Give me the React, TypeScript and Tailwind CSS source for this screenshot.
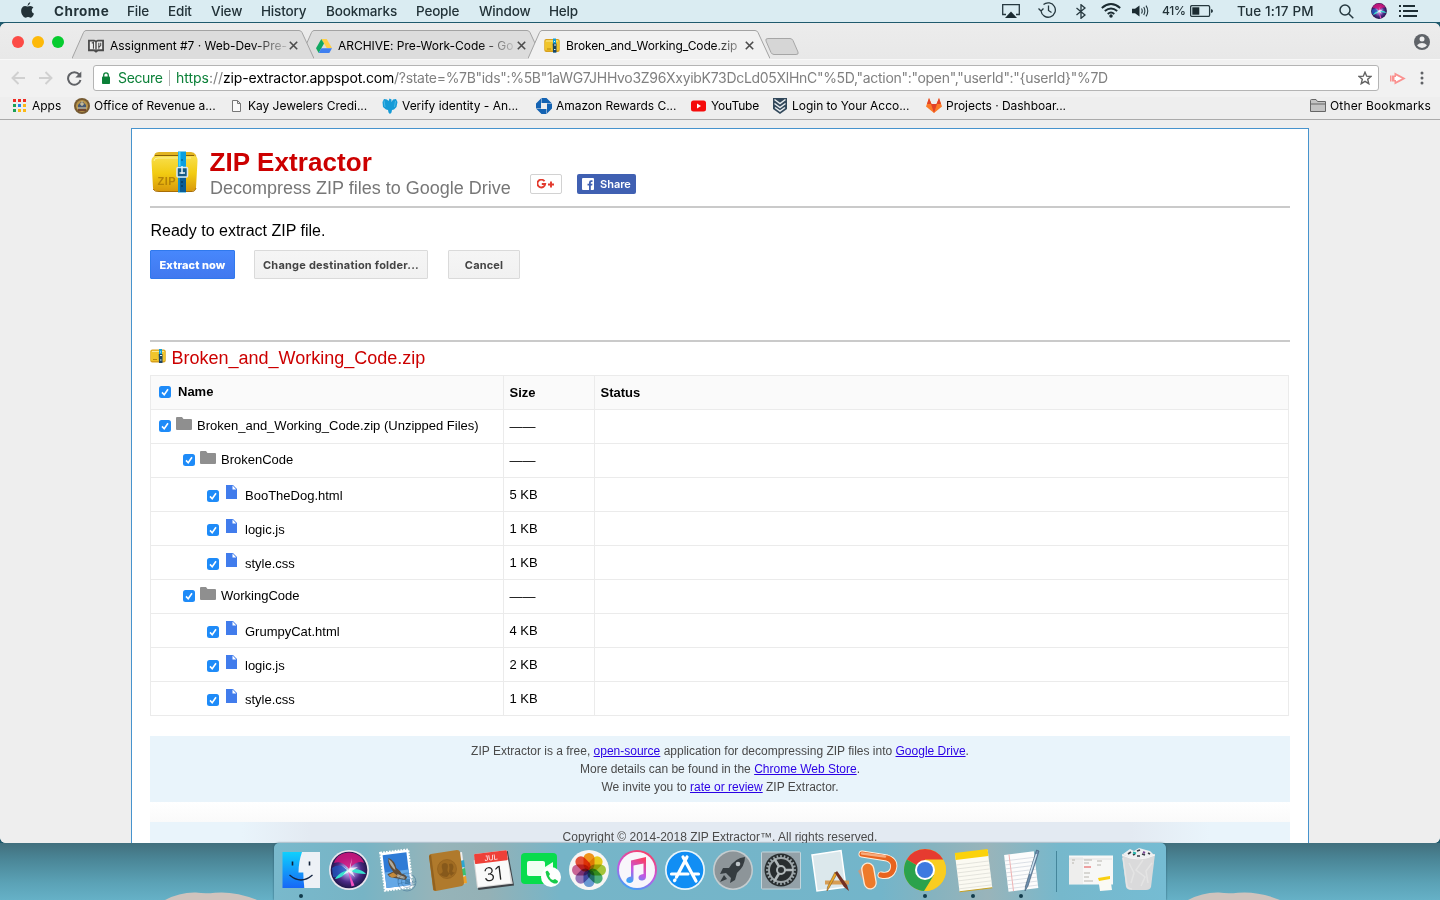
import React from "react";

const UI = "font-['Inter',sans-serif]";

function Menu({ w, children, bold }: { w: string; children: string; bold?: boolean }) {
  return <span className={`${w} shrink-0 whitespace-nowrap ${bold ? "font-bold tracking-[0.500px]" : "font-medium tracking-[-0.180px]"}`}>{children}</span>;
}

function SiriBall({ id }: { id: string }) {
  return (
    <g>
      <defs>
        <radialGradient id={id} cx="50%" cy="50%" r="55%">
          <stop offset="0" stopColor="#fff" />
          <stop offset=".25" stopColor="#a890dd" />
          <stop offset=".6" stopColor="#4c2a86" />
          <stop offset="1" stopColor="#16103a" />
        </radialGradient>
      </defs>
      <circle cx="24" cy="27" r="20" fill="#e9e6ee" />
      <circle cx="24" cy="27" r="18.300" fill={`url(#${id})`} />
      <path d="M9 20C13 6 35 6 39 20C33 17 28 22 24 26C19 20 15 18 9 20Z" fill="#d3147c" opacity=".85" />
      <path d="M7 25C13 20 20 23 24 27C18 31 12 35 8 34Z" fill="#1d58c0" opacity=".75" />
      <path d="M24 27C31 25 38 27 41 31C35 31 29 30 24 27ZM24 27C20 32 14 36 10 36C13 31 18 28 24 27Z" fill="#37e3cf" />
      <path d="M23 27L26.500 43.500L29.500 42.500Z" fill="#f350c0" />
      <path d="M24 27L27 15L25.500 25L33 24L27 28L30 34L24 29L18 32L22 27L16 22Z" fill="#fff" opacity=".75" />
    </g>
  );
}

function ZipLogo({ className }: { className: string }) {
  return (
    <svg className={className} viewBox="0 0 47 42">
      <defs>
        <linearGradient id="zipBody" x1="0" y1="0" x2="0" y2="1">
          <stop offset="0" stopColor="#f8df4c" />
          <stop offset=".5" stopColor="#f2cb12" />
          <stop offset="1" stopColor="#d99a0a" />
        </linearGradient>
      </defs>
      <path d="M4 2.500Q5 1 8 1H40Q43 1 45 4L46 10H1Z" fill="#e2b422" />
      <path d="M4 4.700H43" stroke="#8a6106" strokeWidth="1.200" />
      <path d="M.5 10Q.5 5 6 5H42Q47 5 46.500 10L45 37Q44.500 40 41 40H6Q2.500 40 2 37Z" fill="url(#zipBody)" />
      <path d="M3 10Q3 7 7 7H40" stroke="#fcf09a" fill="none" />
      <path d="M2 38Q4 41 8 40.500H40Q44 41 45 37" stroke="#a86d05" fill="none" />
      <rect x="27" y=".500" width="8" height="41" fill="#0a9fe0" />
      <path d="M28.500 1V15" stroke="#41d3ff" strokeWidth="2" />
      <path d="M27 27H35V41H27Z" fill="#0a5c96" />
      <path d="M28 27V41" stroke="#18a4df" strokeWidth="1.500" />
      <rect x="26" y="16.500" width="10.500" height="9.500" rx="1" fill="#155b86" stroke="#dce8ee" strokeWidth="1.600" />
      <path d="M31 15V23M28.500 22H34" stroke="#e9f4f8" strokeWidth="1.500" />
      <circle cx="31" cy="9" r=".8" fill="#05466b" />
      <circle cx="31" cy="31" r=".8" fill="#04283e" />
      <circle cx="31" cy="35" r=".8" fill="#04283e" />
      <text x="6.500" y="34" fontFamily="Liberation Sans" fontWeight="bold" fontSize="11" fill="#b58307" textLength="18">ZIP</text>
    </svg>
  );
}

function SmallZip({ className }: { className: string }) {
  return (
    <svg className={className} viewBox="0 0 16 14">
      <rect x=".3" y=".5" width="15.400" height="13" rx="2" fill="#d8a01c" />
      <rect x=".8" y="1.500" width="14.400" height="10.500" rx="1.500" fill="#f0c52c" />
      <path d="M2 2.500H14" stroke="#fae995" />
      <path d="M3 10.500H7" stroke="#b8860b" />
      <path d="M9 0H12V14H9Z" fill="#129fd8" />
      <path d="M8.700 5H12.500V14H9Z" fill="#1c4564" />
      <path d="M10 6.500H12M10 3H11M10 11H11.500" stroke="#e2f2f7" />
    </svg>
  );
}

function CloseX() {
  return (
    <svg className="h-[9px] w-[9px] shrink-0" viewBox="0 0 9 9">
      <path d="M.8.8L8.200 8.200M8.200.8L.8 8.200" stroke="#4c4c4c" strokeWidth="1.600" />
    </svg>
  );
}

function Tab({ icon, title, active, track, z }: { icon: React.ReactNode; title: string; active?: boolean; track: string; z: string }) {
  return (
    <div className={`relative h-[29px] w-[242px] shrink-0 -mr-[14px] ${z}`}>
      <svg className="absolute inset-0 h-[29px] w-[242px]" viewBox="0 0 242 29">
        <path d="M0 29L11.500 2.500Q12.500 .5 14 .5H227Q229 .5 230 2.500L242 29Z" fill={active ? "#f1f1f1" : "#dcdcdc"} />
        <path d="M0 28.500L11.500 2.500Q12.500 .5 14 .5H227Q229 .5 230 2.500L242 28.500" fill="none" stroke="#a3a3a3" />
      </svg>
      <div className="relative flex h-[29px] items-center pl-4 pt-[2px]">
        <span className="flex w-[22px] shrink-0">{icon}</span>
        <span className="flex w-[172px] shrink-0">
          <span className={`block whitespace-nowrap bg-clip-text text-[12px] leading-[16px] text-transparent ${track} ${active ? "bg-[linear-gradient(90deg,#000_86%,#0006_100%)]" : "bg-[linear-gradient(90deg,#000_80%,#0002_100%)]"}`}>{title}</span>
        </span>
        <span className="ml-[7px] flex"><CloseX /></span>
      </div>
    </div>
  );
}

function DriveIcon() {
  return (
    <svg className="h-[14px] w-4" viewBox="0 0 16 14">
      <path d="M5.300 0H10.700L16 9H10.700Z" fill="#ffcf48" />
      <path d="M5.300 0L8 4.600L2.700 14L0 9.300Z" fill="#11a861" />
      <path d="M5.300 9.300H16L13.300 14H2.700Z" fill="#3f7ff0" />
    </svg>
  );
}

function BookIcon() {
  return (
    <svg className="h-[14px] w-[16px]" viewBox="0 0 17 14" fill="none" stroke="#4a4a4a">
      <path d="M1 1.200H6.500L8.500 2.200L10.500 1.200H16V11.500H10.500L8.500 13L6.500 11.500H1Z" fill="#eee" strokeWidth="1.900" />
      <path d="M8.500 2.500V12" strokeWidth="1.500" />
      <path d="M4 4L5.800 3V10M11.500 3.500V10M11.500 8.500L13.500 6.500V3.500" strokeWidth="1.100" />
    </svg>
  );
}

function Bookmark({ icon, label, iw, tw, track = "tracking-[-0.030px]" }: { icon: React.ReactNode; label: string; iw: string; tw: string; track?: string }) {
  return (
    <div className="flex shrink-0 items-center">
      <span className={`${iw} flex shrink-0`}>{icon}</span>
      <span className={`${tw} ${track} shrink-0 whitespace-nowrap`}>{label}</span>
    </div>
  );
}

function Check() {
  return (
    <svg className="h-3 w-3 shrink-0" viewBox="0 0 12 12">
      <rect width="12" height="12" rx="2.500" fill="#1e8bf8" />
      <path d="M3 6.400L5.200 8.700L9 3.300" fill="none" stroke="#fff" strokeWidth="1.600" />
    </svg>
  );
}

const rows = [
  { name: "Broken_and_Working_Code.zip (Unzipped Files)", size: "——", depth: 0, folder: true },
  { name: "BrokenCode", size: "——", depth: 1, folder: true },
  { name: "BooTheDog.html", size: "5 KB", depth: 2 },
  { name: "logic.js", size: "1 KB", depth: 2 },
  { name: "style.css", size: "1 KB", depth: 2 },
  { name: "WorkingCode", size: "——", depth: 1, folder: true },
  { name: "GrumpyCat.html", size: "4 KB", depth: 2 },
  { name: "logic.js", size: "2 KB", depth: 2 },
  { name: "style.css", size: "1 KB", depth: 2 },
];
const indent = ["pl-2", "pl-8", "pl-14"];

function FileRow({ row }: { row: (typeof rows)[number] }) {
  return (
    <div className="flex h-[34px] border-b border-[#ebebeb]">
      <div className={`flex w-[353px] items-center border-r border-[#ebebeb] ${indent[row.depth]}`}>
        <span className={row.folder ? "flex pb-[1px]" : "flex pt-[3px]"}><Check /></span>
        {row.folder ? (
          <svg className="mb-[7px] ml-[5px] h-[13px] w-4" viewBox="0 0 16 13">
            <path d="M0 1Q0 0 1 0H6L7.500 2H15Q16 2 16 3V12Q16 13 15 13H1Q0 13 0 12Z" fill="#8f8f8f" />
          </svg>
        ) : (
          <svg className="mb-[6px] ml-[7px] mr-[3px] h-[14px] w-[11px]" viewBox="0 0 11 14">
            <path d="M0 0H7L11 4V14H0Z" fill="#417cec" />
            <path d="M6.500 .6V4.400H10.300Z" fill="#fff" />
          </svg>
        )}
        <span className={`ml-[5px] whitespace-nowrap ${row.folder ? "pb-px" : "pt-[3px]"}`}>{row.name}</span>
      </div>
      <div className="w-[91px] border-r border-[#ebebeb] pl-[5.500px] leading-[33px]">{row.size}</div>
    </div>
  );
}

function DockIcon({ children, dot }: { children: React.ReactNode; dot?: boolean }) {
  return (
    <svg className="h-[57px] w-12 shrink-0" viewBox="0 0 48 57">
      {children}
      {dot && <circle cx="24" cy="53" r="2" fill="#123c4c" />}
    </svg>
  );
}

const petals = ["#f79a1c", "#efd21c", "#a8cc3b", "#4fb580", "#6c9fdc", "#9a7bc2", "#d0699c", "#ec5338"];
const toothAngles = Array.from({ length: 24 }, (_, i) => i * 15);

function Dock() {
  return (
    <div className="flex h-[57px] w-[892px] rounded-t-[5px] bg-[linear-gradient(90deg,#79b9cc_0%,#77b4c5_10%,#96b4b9_18%,#94b1b6_24%,#76b5c8_32%,#73b5ca_68%,#86b3bf_74%,#99b4ba_80%,#76b8cc_88%,#75bcd3_100%)] pl-[3px] shadow-[0_0_2px_#24566a]">
      <DockIcon dot>
        <defs><linearGradient id="finder" x1="0" y1="0" x2="0" y2="1"><stop stopColor="#0fd0fd" /><stop offset="1" stopColor="#1767f6" /></linearGradient></defs>
        <path d="M5.500 9H27V45H5.500Z" fill="url(#finder)" />
        <path d="M25 9H43V45H27.500Q26.300 38 26.300 29.500H21.500Q21.500 19 25 9Z" fill="#edf1f6" />
        <path d="M15.500 18.500V22.500M32.500 18.500V22.500" stroke="#101f36" strokeWidth="1.600" />
        <path d="M12.500 32Q24 42 35.500 32" stroke="#122340" strokeWidth="1.300" fill="none" />
      </DockIcon>
      <DockIcon><SiriBall id="siriDock" /></DockIcon>
      <DockIcon>
        <g transform="rotate(-7 24 27)">
          <rect x="9.500" y="8" width="28" height="38" fill="#fff" />
          <rect x="9.500" y="8" width="28" height="38" fill="none" stroke="#fff" strokeWidth="2.200" strokeDasharray="1.700 1.200" />
          <rect x="11.500" y="10.500" width="24" height="33" fill="#2f7bd6" />
          <rect x="11.500" y="28" width="24" height="15.500" fill="#65a8e6" />
          <path d="M17 14Q23 17 23.500 25Q27 28 28 31Q33 33 33 36L31 38L22 35L16 33L14 30L20 28Q15 21 17 14Z" fill="#5f4c39" />
          <path d="M17 15Q22 19 22.500 27Q17 22 17 15Z" fill="#b1ab9c" />
          <path d="M24 31L31 35L30 37L23 34Z" fill="#ada698" />
          <path d="M15 31L20 29L24 33L18 34Z" fill="#c48a3c" />
        </g>
        <circle cx="34" cy="39" r="9" fill="none" stroke="#2b5f88" strokeWidth=".7" opacity=".6" />
        <circle cx="34" cy="39" r="5.500" fill="none" stroke="#2b5f88" strokeWidth=".7" opacity=".6" />
        <rect x="32" y="36" width="5" height="5" fill="#2b5f88" opacity=".45" />
        <path d="M24 37Q29 34 34 38T43 38M25 41Q30 38 35 41T42 41" fill="none" stroke="#2b5f88" strokeWidth=".6" opacity=".6" />
      </DockIcon>
      <DockIcon>
        <path d="M34 10L41 9L45 40L37 42Z" fill="#eee" />
        <path d="M39 18L43 17L44 24L39 25Z" fill="#2ca7d2" />
        <path d="M40 26L44 25L45 32L40 33Z" fill="#3ac16f" />
        <path d="M40 34L45 33L46 40L40 41Z" fill="#eca12b" />
        <path d="M8 13Q8 11.500 10 11L36 7Q38.500 7 39 9L43 40Q43 42 41 43L15 48Q12 48 12 46Z" fill="#b07a2c" />
        <path d="M8 13L10 11.500L15 47.500L12.500 47Z" fill="#93621f" />
        <circle cx="26" cy="26" r="9.500" fill="#a16c22" stroke="#8d5d1d" strokeWidth=".6" />
        <path d="M18.500 31Q22.500 30 21.500 27Q19 20 24 20Q28 20 26.500 26Q26 29 29 30.500L26 34Q21 34 18.500 31ZM28 21Q32 19 32.500 24Q32 27 31 28Q32 30 34 29.500L30 33L28 29Q29 25 28 21Z" fill="#87591b" />
      </DockIcon>
      <DockIcon>
        <g transform="rotate(-7 24 27)">
          <path d="M7 10H41L43 45H7Z" fill="#3e4348" />
          <path d="M6 15H40L42 43H6Z" fill="#d8d8d8" />
          <rect x="7" y="9" width="33" height="33" rx="1" fill="#fafafa" />
          <rect x="7" y="9" width="33" height="10" rx="1" fill="#ee4038" />
          <text x="23.500" y="17" fontSize="7.500" fontFamily="Liberation Sans" fill="#fff" textAnchor="middle">JUL</text>
          <text x="23.500" y="37.500" fontSize="19" fontFamily="Inter" fontWeight="300" fill="#222" textAnchor="middle">31</text>
        </g>
      </DockIcon>
      <DockIcon>
        <rect x="4" y="10" width="36" height="31" rx="4" fill="#08dc4d" />
        <rect x="10" y="18" width="18" height="15" rx="2" fill="#effff2" />
        <path d="M28 24L36 19V33L28 28Z" fill="#effff2" />
        <circle cx="34" cy="34" r="10" fill="#fff" />
        <path d="M28.500 29Q30 27 31 28L33 31L32 33Q33 36 36 37L38 36L41 38Q41 41 37 40.500Q30 38 28.500 29Z" fill="#17cc4b" />
      </DockIcon>
      <DockIcon>
        <circle cx="24" cy="27" r="20" fill="#f7f5f4" />
        {petals.map((c, i) => <rect key={c} x="18.500" y="10" width="11" height="17" rx="5.500" fill={c} className="mix-blend-multiply" transform={`rotate(${i * 45} 24 27)`} />)}
      </DockIcon>
      <DockIcon>
        <defs>
          <linearGradient id="tunes" x1=".7" y1="0" x2=".3" y2="1"><stop stopColor="#fb3e63" /><stop offset=".55" stopColor="#c358e4" /><stop offset="1" stopColor="#37a6f8" /></linearGradient>
        </defs>
        <circle cx="24" cy="27" r="20" fill="url(#tunes)" /><circle cx="24" cy="27" r="18" fill="#f8f6fb" />
        <path d="M18 17.500L33 14V33.500Q33 37 29.500 37.500Q25.500 38 25.500 34.500Q25.500 31.500 30.500 31V20.500L20.500 22.500V36Q20.500 39.500 17 40Q13 40 13.300 37Q13.600 34 18 33.500Z" fill="url(#tunes)" />
      </DockIcon>
      <DockIcon>
        <circle cx="24" cy="27" r="20" fill="#e9f5fb" /><circle cx="24" cy="27" r="18.300" fill="#118ef4" />
        <path d="M26 14L15.500 34M22 14L35 38M10.500 31H27M32 31H37.500M13.500 37.500L14 37" stroke="#fff" strokeWidth="3.200" strokeLinecap="round" />
      </DockIcon>
      <DockIcon>
        <circle cx="24" cy="27" r="20" fill="#c5cdd0" /><circle cx="24" cy="27" r="18.500" fill="#8d9599" />
        <path d="M36 14Q26 15 20 25L14 25L11 31L17 30L22 35L21 40L26 37L28 30Q36 23 36 14Z" fill="#353c40" />
        <path d="M15 32L11 39L18 36Z" fill="#353c40" /><circle cx="29" cy="21" r="2.300" fill="#bec5c8" />
      </DockIcon>
      <DockIcon>
        <rect x="4.500" y="9" width="39" height="37" rx="1" fill="#93a1a8" stroke="#c3d5dc" />
        <circle cx="24" cy="27" r="16.500" fill="#282d2f" />
        {toothAngles.map((a) => <path key={a} d="M23.200 12H24.800V15H23.200Z" fill="#9aa5a9" transform={`rotate(${a} 24 27)`} />)}
        <circle cx="24" cy="27" r="12" fill="none" stroke="#9da5a8" strokeWidth="2" />
        <circle cx="24" cy="27" r="4" fill="none" stroke="#b1b8ba" strokeWidth="2" />
        <path d="M28 27H36M22 23.500L17.500 16M22 30.500L17.500 38" stroke="#b1b8ba" strokeWidth="2.500" />
      </DockIcon>
      <DockIcon>
        <path d="M7 12L36 7.500L41 44L12 48Z" fill="#dce8ec" stroke="#fff" strokeWidth="1.500" />
        <path d="M20 37.500H44V41.500H20Z" fill="#d69d55" />
        <path d="M32 31L24 45L22 48L22.500 44L30 29Z" fill="#efaa26" stroke="#7f542a" strokeWidth=".6" />
        <path d="M32 28L42 42L44 48L39 44L30 30Z" fill="#733022" />
      </DockIcon>
      <DockIcon>
        <path d="M9 11L34 15Q43 18 40 27Q37 34 28 32" stroke="#fff0df" strokeWidth="7" fill="none" strokeLinecap="round" />
        <path d="M9 11L34 15Q43 18 40 27Q37 34 28 32" stroke="#e8641f" strokeWidth="5.200" fill="none" strokeLinecap="round" />
        <path d="M9 10.500L32 13.500" stroke="#f6ad80" strokeWidth="2.500" strokeLinecap="round" />
        <path d="M5 28L11 39L10 24Z" fill="#c89a80" />
        <rect x="10" y="20" width="12" height="26" rx="6" fill="#ee7a2a" stroke="#ffe9d3" strokeWidth="1.300" transform="rotate(-10 16 33)" />
      </DockIcon>
      <DockIcon dot>
        <circle cx="24" cy="27" r="21" fill="#f7ca1d" />
        <path d="M24 27L5.800 16.500A21 21 0 0 1 42.200 16.500H24Z" fill="#e63b30" />
        <path d="M24 27L5.800 16.500A21 21 0 0 0 23 48L33 32Z" fill="#2ba24c" />
        <path d="M24 17H42.500A21 21 0 0 1 24 48L33 32Z" fill="#f9cd20" />
        <circle cx="24" cy="27" r="10" fill="#fff" /><circle cx="24" cy="27" r="8" fill="#3d7ae0" />
      </DockIcon>
      <DockIcon dot>
        <g transform="rotate(-7 24 27)"><rect x="8" y="9" width="33" height="38" fill="#fbfaf2" /><rect x="8" y="8" width="33" height="7" fill="#fbd20b" />
        <path d="M8 20H41M8 24H41M8 28H41M8 32H41M8 36H41M8 40H41M8 44H41" stroke="#dcdbd5" strokeWidth=".7" /><path d="M8 47H41" stroke="#c5a023" /></g>
      </DockIcon>
      <DockIcon dot>
        <g transform="rotate(-7 24 27)"><rect x="9" y="10" width="30" height="37" fill="#fcfcfc" />
        <path d="M9 16H39M9 20H39M9 24H39M9 28H39M9 32H39M9 36H39M9 40H39M9 44H39" stroke="#cfd5dd" strokeWidth=".7" /><path d="M14 10V47" stroke="#efb4b4" /></g>
        <path d="M39.500 7L42 8L31 43L28 48L28.500 43Z" fill="#6d8eae" stroke="#3a566f" strokeWidth=".6" /><path d="M39.500 11L33 31" stroke="#d3e6f2" strokeWidth="1.300" />
      </DockIcon>
      <svg className="h-[57px] w-[24px] shrink-0" viewBox="0 0 24 57"><path d="M11.500 8V49" stroke="#45869b" /></svg>
      <svg className="h-[57px] w-12 shrink-0" viewBox="0 0 48 57">
        <rect x="0" y="12.500" width="44" height="29" fill="#f7f7f6" />
        <path d="M0 14H14V41H0Z" fill="#eeeeed" /><path d="M0 16H43" stroke="#e0e0e0" />
        <path d="M15 17H23M15 20H20M15 30H21M15 34H20M15 38H24M3 17H6M3 20H5M28 18H33M28 22H32" stroke="#b8b5ae" />
        <path d="M15 24H22" stroke="#e34a4a" />
        <path d="M29 35L41 33L43 47L31 48Z" fill="#fbfaf4" /><path d="M29 35L41 33V36L30 38Z" fill="#f9cf12" />
      </svg>
      <svg className="h-[57px] w-12 shrink-0" viewBox="0 0 48 57">
        <path d="M5 11H38L34 44Q33 47 29 47H15Q10 47 9 44Z" fill="#dadadb" />
        <path d="M6 15L10 43Q11 46 15 46M12 20L17 30L14 40M26 17L19 27L28 34L24 43M35 20L29 28L31 40" stroke="#e4e4e4" fill="none" strokeWidth="1.500" />
        <path d="M6 11L13 6L17 8L22 5L29 7L33 8L37 12L29 15H13Z" fill="#eff0f1" />
        <path d="M11 11L14 9M16 12L18 11M20 8L23 7M25 11L28 12M31 10L33 11M20 13H23" stroke="#3a3e45" strokeWidth="1.700" fill="none" />
        <path d="M16 9.500L19 10.500" stroke="#22b4a8" strokeWidth="2" /><path d="M26 9L28 10" stroke="#7c4995" strokeWidth="2" />
        <path d="M5 12Q21 20 38 12" fill="none" stroke="#f7f7f7" />
      </svg>
    </div>
  );
}

function Link({ children }: { children: string }) {
  return <a className="text-[#2a00e6] underline">{children}</a>;
}

export default function App() {
  return (
    <div className="relative flex h-[900px] w-[1440px] flex-col overflow-hidden bg-[#1f5a6d] font-['Liberation_Sans',sans-serif] text-black">
      <header className={`flex h-[22px] shrink-0 items-center bg-[#daecf2] pl-[21px] text-[13.500px] text-[#223238] ${UI}`}>
        <span className="w-[33px] shrink-0">
          <svg className="mb-[2px] h-[16px] w-[13px]" viewBox="0 0 13 16" fill="#233238"><path d="M9.200 0Q9.300 2.800 6.600 3.900Q6.300 1.200 9.200 0ZM6.700 4.600Q7.800 4 9.200 3.900Q11.400 4 12.400 5.600Q10.600 6.800 10.700 8.700Q10.800 10.800 13 11.700Q11.400 15.700 9.400 15.700Q7.900 14.900 6.700 15.100L4.600 15.700Q2.600 15.700 1.100 12.800Q-.6 9.200.7 6.200Q1.900 4 4 4Q5.300 4 6.700 4.600Z" /></svg>
        </span>
        <Menu w="w-[73px]" bold>Chrome</Menu>
        <Menu w="w-[41px]">File</Menu>
        <Menu w="w-[43px]">Edit</Menu>
        <Menu w="w-[50px]">View</Menu>
        <Menu w="w-[65px]">History</Menu>
        <Menu w="w-[90px]">Bookmarks</Menu>
        <Menu w="w-[63px]">People</Menu>
        <Menu w="w-[70px]">Window</Menu>
        <Menu w="w-[453px]">Help</Menu>
        <span className="w-9 shrink-0"><svg className="h-[14px] w-[18px]" viewBox="0 0 18 14"><path d="M4 10.500H.7V.7H17.300V10.500H14" fill="none" stroke="#26383f" strokeWidth="1.300" /><path d="M9 7.500L15 14H3Z" fill="#1b2b31" /></svg></span>
        <span className="w-[38px] shrink-0"><svg className="mb-[2px] h-[16px] w-[19px]" viewBox="0 0 19 16" fill="none" stroke="#26383f" strokeWidth="1.300"><path d="M3 9A7.200 7.200 0 1 0 5.500 2.500M.5 6.500L3 9L5.500 6.500M10.500 3.500V8.500L13.500 10.500" /></svg></span>
        <span className="w-[25px] shrink-0"><svg className="h-[15px] w-[10px]" viewBox="0 0 10 15" fill="none" stroke="#26383f" strokeWidth="1.300"><path d="M.5 4L9 11L5 14.300V.7L9 4L.5 11" /></svg></span>
        <span className="w-[31px] shrink-0"><svg className="mb-[2px] h-[15px] w-[20px]" viewBox="0 0 20 15" fill="none" stroke="#1b2b31" strokeWidth="1.900"><path d="M.8 5Q10-2.800 19.200 5M3.800 8Q10 2.800 16.200 8M6.700 10.900Q10 8.200 13.300 10.900" /><circle cx="10" cy="13" r=".8" fill="#1b2b31" /></svg></span>
        <span className="w-[30px] shrink-0"><svg className="h-[12px] w-[17px]" viewBox="0 0 17 12"><path d="M0 3.700H3L7.500.5V11.500L3 8.300H0Z" fill="#1b2b31" /><path d="M9.500 3.500Q11 6 9.500 8.500M11.700 2Q14 6 11.700 10M14 .6Q17.500 6 14 11.400" fill="none" stroke="#26383f" strokeWidth="1.100" /></svg></span>
        <span className="w-[28px] shrink-0 whitespace-nowrap text-[12px] font-medium tracking-[-0.300px]">41%</span>
        <span className="w-[47px] shrink-0"><svg className="h-[12px] w-[23px]" viewBox="0 0 23 12"><rect x=".6" y=".6" width="19" height="10.800" rx="1.500" fill="none" stroke="#26383f" strokeWidth="1.300" /><rect x="2.300" y="2.300" width="7" height="7.400" fill="#1b2b31" /><path d="M21 4Q23 4.500 23 6T21 8Z" fill="#26383f" /></svg></span>
        <span className="w-[102px] shrink-0 whitespace-nowrap font-medium tracking-[0.150px]">Tue 1:17 PM</span>
        <span className="w-[32px] shrink-0"><svg className="h-[15px] w-[15px]" viewBox="0 0 15 15" fill="none" stroke="#26383f" strokeWidth="1.500"><circle cx="6" cy="6" r="5" /><path d="M9.700 9.700L14.300 14.300" /></svg></span>
        <span className="w-[28px] shrink-0"><svg className="h-4 w-4" viewBox="5.500 8.500 37 37"><SiriBall id="siriMenu" /></svg></span>
        <span className="shrink-0"><svg className="h-[12px] w-[19px]" viewBox="0 0 19 12" stroke="#1e2e34" strokeWidth="1.900"><path d="M0 1H2M4 1H16M0 6H2M4 6H19M0 11H2M4 11H18" /></svg></span>
      </header>

      <main className="mt-px flex h-[820px] shrink-0 flex-col overflow-hidden rounded-[6px] bg-[#eeeeee]">
        <div className={`flex h-9 shrink-0 items-end bg-[linear-gradient(180deg,#ececec,#e8e8e8)] ${UI}`}>
          <div className="mb-[11px] flex w-[72px] shrink-0 gap-2 pl-3">
            <span className="h-3 w-3 rounded-full bg-[#fc4b46]" />
            <span className="h-3 w-3 rounded-full bg-[#fdb909]" />
            <span className="h-3 w-3 rounded-full bg-[#06cc2f]" />
          </div>
          <Tab icon={<BookIcon />} title="Assignment #7 · Web-Dev-Pre-" track="tracking-[-0.020px]" z="z-[2]" />
          <Tab icon={<DriveIcon />} title="ARCHIVE: Pre-Work-Code - Go" track="tracking-[-0.040px]" z="z-[1]" />
          <Tab icon={<SmallZip className="h-[15px] w-4" />} title="Broken_and_Working_Code.zip" active track="tracking-[-0.120px]" z="z-[3]" />
          <svg className="mb-[4px] ml-[9px] h-[17px] w-[34px] shrink-0" viewBox="0 0 34 17"><path d="M3 .5H25Q27 .5 28 2.500L33 14Q34 16.500 31 16.500H9Q7 16.500 6 14.500L1 3Q0 .5 3 .5Z" fill="#d6d6d6" stroke="#a6a6a6" /></svg>
          <svg className="mb-[9px] ml-auto mr-[10px] h-4 w-4" viewBox="0 0 16 16"><circle cx="8" cy="8" r="8" fill="#5f6368" /><circle cx="8" cy="5" r="2.500" fill="#eee" /><path d="M3 11.200Q5 9 8 9T13 11.200Q11 14 8 14T3 11.200Z" fill="#eee" /></svg>
        </div>

        <div className={`flex h-[38px] shrink-0 items-center border-t border-[#f8f8f8] bg-[#f1f1f1] pb-px ${UI}`}>
          <div className="flex w-[93px] shrink-0 items-center pl-[11px]">
            <svg className="h-[14px] w-[28px]" viewBox="0 0 28 14" fill="none" stroke="#d0d0d0" strokeWidth="1.900"><path d="M14 7H1.500M7.500 1L1.500 7L7.500 13" /></svg>
            <svg className="h-[14px] w-[28px]" viewBox="0 0 28 14" fill="none" stroke="#d0d0d0" strokeWidth="1.900"><path d="M0 7H12.500M6.500 1L12.500 7L6.500 13" /></svg>
            <svg className="h-[15px] w-[15px]" viewBox="0 0 15 15"><path d="M12.300 3.500A6.300 6.300 0 1 0 13.500 9" fill="none" stroke="#606266" strokeWidth="2" /><path d="M14.300.5V6.500H8.300Z" fill="#606266" /></svg>
          </div>
          <div className="flex h-[26px] w-[1286px] shrink-0 items-center rounded-[3px] border border-[#b4b4b4] bg-white pb-px text-[14px]">
            <svg className="ml-2 h-[12px] w-2 shrink-0" viewBox="0 0 8 12"><rect y="4.500" width="8" height="7.500" rx=".8" fill="#0b8038" /><path d="M1.700 5V3.200A2.300 2.300 0 0 1 6.300 3.200V5" fill="none" stroke="#0b8038" strokeWidth="1.300" /></svg>
            <span className="ml-2 w-[51px] shrink-0 tracking-[-0.350px] text-[#0b8038]">Secure</span>
            <span className="h-4 w-[7px] shrink-0 border-l border-[#b5b5b5]" />
            <span className="w-[1181px] shrink-0 whitespace-nowrap text-[#808080]">
              <span className="tracking-[-0.020px]"><span className="text-[#0b8038]">https</span>://</span><span className="tracking-[-0.180px] text-black">zip-extractor.appspot.com</span><span className="tracking-[-0.300px]">/?state=%7B"ids":%5B"1aWG7JHHvo3Z96XxyibK73DcLd05XlHnC"%5D,"action":"open","userId":"{"{userId}"}"%7D</span>
            </span>
            <svg className="ml-px h-[14px] w-[14px] shrink-0" viewBox="0 0 14 14" fill="none" stroke="#626262" strokeWidth="1.400"><path d="M7 1.200L8.700 5.200L13 5.500L9.700 8.300L10.800 12.700L7 10.300L3.200 12.700L4.300 8.300L1 5.500L5.300 5.200Z" /></svg>
          </div>
          <svg className="ml-[11px] h-[13px] w-[16px] shrink-0" viewBox="0 0 16 13" fill="#fa9290"><path d="M0 3.500H1.500V9.500H0ZM2 3.500H4.500V9.500H2ZM4.500.5L15.800 6.500L4.500 12.500Z" /><path d="M6 3.500L12 6.500L6 9.500V8H4.500V5H6Z" fill="#fff" /></svg>
          <svg className="ml-[14px] h-[14px] w-1 shrink-0" viewBox="0 0 4 14" fill="#606266"><circle cx="2" cy="2" r="1.500" /><circle cx="2" cy="7" r="1.500" /><circle cx="2" cy="12" r="1.500" /></svg>
        </div>

        <div className={`flex h-[23px] shrink-0 items-start border-b border-[#aaa] bg-[#eeeeee] pl-[13px] text-[12px] leading-[17px] ${UI}`}>
          <Bookmark iw="w-[19px]" tw="w-[42px]" label="Apps" icon={
            <svg className="h-[13px] w-[13px]" viewBox="0 0 13 13"><path d="M0 0H3V3H0ZM5 0H8V3H5ZM10 0H13V3H10Z" fill="#ef2b23" /><path d="M0 5H3V8H0Z" fill="#1ba157" /><path d="M5 5H8V8H5Z" fill="#2186ee" /><path d="M10 5H13V8H10ZM5 10H8V13H5ZM10 10H13V13H10Z" fill="#fbb916" /><path d="M0 10H3V13H0Z" fill="#1ba157" /></svg>} />
          <Bookmark iw="w-[20px]" tw="w-[138px]" label="Office of Revenue a..." icon={
            <svg className="h-4 w-4" viewBox="0 0 16 16"><circle cx="8" cy="8" r="8" fill="#765b32" /><circle cx="8" cy="8" r="6" fill="#b89449" /><path d="M8 3L12 7V11H4V7Z" fill="#465873" /><path d="M3.500 10H12.500M6 6H10M8 3V8" stroke="#efdba6" /><path d="M4 12H12" stroke="#5e2d24" strokeWidth="1.500" /></svg>} />
          <Bookmark iw="w-[16px]" tw="w-[134px]" label="Kay Jewelers Credi..." icon={
            <svg className="h-[12px] w-[9px]" viewBox="0 0 9 12" fill="#fafafa" stroke="#777"><path d="M.5.5H5.500L8.500 3.500V11.500H.5ZM5.500.5V3.500H8.500" /></svg>} />
          <Bookmark iw="w-[20px]" tw="w-[134px]" label="Verify identity - An..." icon={
            <svg className="h-4 w-4" viewBox="0 0 16 16"><path d="M6.500 3L7.500 .5L9.500 1.500L9.500 4L11 1.500L14 1L15.500 4L14.500 9L12 11.500L10 12L9.500 14.500L8 16L6.500 14.500L6 12L4 11.500L1 9L.5 4L2 1L5 1.500Z" fill="#159bd7" /><path d="M2 2.500L3 9M13.500 3L12.500 9" stroke="#58c0ea" fill="none" strokeWidth=".8" /></svg>} />
          <Bookmark iw="w-[20px]" tw="w-[135px]" label="Amazon Rewards C..." icon={
            <svg className="h-4 w-4" viewBox="0 0 16 16" fill="#1463b3"><path d="M5.500 0H10.500L15.500 5H5.500ZM16 5.500V10.500L11 15.500V5.500ZM10.500 16H5.500L.5 11H10.500ZM0 10.500V5.500L5 .5V10.500Z" /></svg>} />
          <Bookmark iw="w-[20px]" tw="w-[62px]" label="YouTube" track="tracking-[-0.150px]" icon={
            <svg className="h-[12px] w-[15px]" viewBox="0 0 15 12"><rect y=".5" width="15" height="11" rx="2.500" fill="#f50b0b" /><path d="M6 3.500L10 6L6 8.500Z" fill="#fff" /></svg>} />
          <Bookmark iw="w-[19px]" tw="w-[134px]" label="Login to Your Acco..." icon={
            <svg className="h-4 w-[14px]" viewBox="0 0 14 16"><path d="M0 0H14V11L7 16L0 11Z" fill="#32485b" /><path d="M1.500 1.500L7 5.500L12.500 1.500M1.500 5.500L7 9.500L12.500 5.500M2 9.500L7 13L12 9.500" stroke="#e7ecef" strokeWidth="1.500" fill="none" /></svg>} />
          <Bookmark iw="w-[20px]" tw="w-[122px]" label="Projects · Dashboar..." icon={
            <svg className="h-[15px] w-4" viewBox="0 0 16 15"><path d="M8 15L0 8.500L3 0L5.500 6H10.500L13 0L16 8.500Z" fill="#fc7a28" /><path d="M8 15L5 6H11Z" fill="#e24329" /><path d="M3 0L5.500 6H1ZM13 0L10.500 6H15Z" fill="#e24329" /></svg>} />
          <div className="ml-auto"><Bookmark iw="w-[20px]" tw="w-[110px]" track="tracking-[0.150px]" label="Other Bookmarks" icon={
            <svg className="h-[13px] w-4" viewBox="0 0 16 13" fill="#c4c4c4" stroke="#666"><path d="M.5 12.500V1.500Q.5.5 1.500.5H6L7.500 2.500H15.500V12.500ZM.5 5H15.500" /></svg>} /></div>
        </div>

        <div className="flex min-h-0 flex-1 justify-center bg-[#eeeeee] pt-2">
          <section className="h-[780px] w-[1178px] shrink-0 border border-[#4793cd] bg-white px-[18px]">
            <div className="flex h-[79px] border-b-2 border-[#cacaca]">
              <ZipLogo className="ml-px mt-[22px] h-[42px] w-[47px] shrink-0" />
              <div className="ml-[11.500px] w-[320.500px] shrink-0 pt-[18px]">
                <h1 className="text-[26px] font-bold leading-[30px] tracking-[0.080px] text-[#cc0000]">ZIP Extractor</h1>
                <p className="pl-[0.500px] text-[18px] leading-[22px] text-[#777]">Decompress ZIP files to Google Drive</p>
              </div>
              <div className="mt-[45px] flex h-5 w-8 items-center justify-center rounded-[2px] border border-[#d2d2d2]">
                <svg className="mr-[2px] h-[10px] w-[17px]" viewBox="0 0 17 10" fill="none" stroke="#e33b2e" strokeWidth="1.900"><path d="M7.500 2.300A3.900 3.900 0 1 0 8.200 5H4.800M11 5.500H17M14 2.500V8.500" /></svg>
              </div>
              <div className={`ml-[15px] mt-[45px] flex h-5 w-[59px] items-center rounded-[2px] bg-[#4060b2] pl-[5px] text-[11px] font-semibold text-white ${UI}`}>
                <svg className="mr-[6px] h-3 w-3" viewBox="0 0 12 12"><rect width="12" height="12" rx="1" fill="#fff" /><path d="M7 12V7.500H5.500V5.700H7V4.500Q7 2.200 9.200 2.200H10.500V4H9.500Q8.800 4 8.800 4.700V5.700H10.500L10.200 7.500H8.800V12Z" fill="#4060b2" /></svg>
                Share
              </div>
            </div>
            <p className="mt-[13px] text-[16px] leading-[20px] pl-[0.500px]">Ready to extract ZIP file.</p>
            <div className={`mt-[9px] flex h-[29px] text-[11px] font-bold text-[#444] ${UI}`}>
              <button className="w-[85px] whitespace-nowrap rounded-[1px] border border-[#3079ed] bg-[linear-gradient(180deg,#4787fc,#4179ef)] pt-[2px] font-extrabold tracking-[0.100px] text-white">Extract now</button>
              <button className="ml-[19px] w-[174px] whitespace-nowrap rounded-[1px] border border-[#dadada] bg-[linear-gradient(180deg,#f5f5f5,#f1f1f1)] pt-[2px] tracking-[0.230px]">Change destination folder...</button>
              <button className="ml-5 w-[72px] rounded-[1px] border border-[#dadada] bg-[linear-gradient(180deg,#f5f5f5,#f1f1f1)] pt-[2px] tracking-[0.150px]">Cancel</button>
            </div>
            <div className="mt-[61px] flex h-[35px] items-start border-t-2 border-[#cacaca]">
              <SmallZip className="mt-[7px] h-[14px] w-4 shrink-0" />
              <h2 className="ml-[5.500px] mt-[5px] text-[18px] leading-[22px] text-[#cc0000]">Broken_and_Working_Code.zip</h2>
            </div>
            <div className="w-[1139px] border border-b-0 border-[#ebebeb] text-[13px]">
              <div className="flex h-[34px] border-b border-[#ebebeb] bg-[#fafafa] font-bold">
                <div className="flex w-[353px] items-center border-r border-[#ebebeb] pb-[2px] pl-2"><Check /><span className="ml-[7px]">Name</span></div>
                <div className="w-[91px] border-r border-[#ebebeb] pl-[5.500px] leading-[34px]">Size</div>
                <div className="pl-[5.500px] leading-[34px]">Status</div>
              </div>
              {rows.map((r, i) => <FileRow key={i} row={r} />)}
            </div>
            <div className="mt-5 h-[66px] bg-[#e9f4fb] pt-[6px] text-center text-[12px] leading-[18px] text-[#4a4a4a]">
              <p>ZIP Extractor is a free, <Link>open-source</Link> application for decompressing ZIP files into <Link>Google Drive</Link>.</p>
              <p>More details can be found in the <Link>Chrome Web Store</Link>.</p>
              <p>We invite you to <Link>rate or review</Link> ZIP Extractor.</p>
            </div>
            <div className="h-5 bg-[linear-gradient(180deg,#fff,#fafafa)]" />
            <div className="h-[66px] bg-[linear-gradient(90deg,#e9f4fb_8%,#e3eaf2_14%,#e3eaf2_86%,#e9f4fb_93%)] pt-[6px] text-center text-[12px] leading-[18px] text-[#4a4a4a]">Copyright © 2014-2018 ZIP Extractor™. All rights reserved.</div>
          </section>
        </div>
      </main>

      <footer className="relative flex h-[57px] shrink-0 justify-center bg-[linear-gradient(180deg,#416f7d_0%,#4b8798_30%,#5ba2b6_70%,#66b1c7_100%)]">
        <svg className="absolute bottom-0 left-[165px] h-[8px] w-[92px]" viewBox="0 0 92 8"><path d="M0 8Q15 0 31 .5Q40 2 50 .7Q70-1 92 8Z" fill="#cfc3bd" /></svg>
        <svg className="absolute bottom-0 left-[1188px] h-[8px] w-[92px]" viewBox="0 0 92 8"><path d="M0 8Q15 0 31 .5Q40 2 50 .7Q70-1 92 8Z" fill="#cfc3bd" /></svg>
        <Dock />
      </footer>
    </div>
  );
}
